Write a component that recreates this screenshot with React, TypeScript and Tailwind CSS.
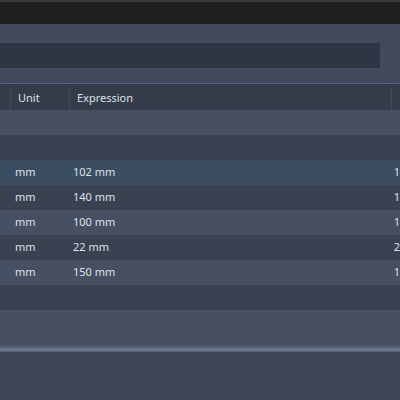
import React from "react";

const rows = [
  {unit: "", expr: "", val: "", tone: "light"},
  {unit: "", expr: "", val: "", tone: "dark"},
  {unit: "mm", expr: "102 mm", val: "1", tone: "selected"},
  {unit: "mm", expr: "140 mm", val: "1", tone: "dark"},
  {unit: "mm", expr: "100 mm", val: "1", tone: "light"},
  {unit: "mm", expr: "22 mm", val: "2", tone: "dark"},
  {unit: "mm", expr: "150 mm", val: "1", tone: "light"},
  {unit: "", expr: "", val: "", tone: "dark"},
];

const toneClass = (tone: string) => {
  if (tone === "selected") return "bg-[#3a4d61]";
  if (tone === "light") return "bg-[#474f62]";
  return "bg-[#3a4151]";
};

const App = () => {
  return (
    <div className="w-[400px] h-[400px] overflow-hidden bg-[#3d4454] text-[#dde2ea] text-[11px]"
         style={{fontFamily: '"Noto Sans", sans-serif'}}>
      <div className="h-[2px] bg-[#3a3a3a]"/>
      <div className="h-[22px] bg-[#1f1f1f]"/>

      <div className="h-[59px] bg-[#414a5c] pt-[19px]">
        <div className="w-[380px] h-[25px] bg-[#2e3543]"/>
      </div>

      <div className="border-t border-t-[#5a6477]">
        <div className="flex h-[26px] bg-[#343b49] items-center pt-[2px]">
          <div className="w-[11px] h-full border-r border-[#414a5a]"/>
          <div className="w-[59px] h-full border-r border-[#414a5a] pl-[7px] flex items-center">Unit</div>
          <div className="w-[322px] h-full border-r border-[#414a5a] pl-[7px] flex items-center">Expression</div>
          <div className="flex-1 h-full"/>
        </div>

        {rows.map((row, index) => (
          <div key={index} className={`flex h-[25px] items-center ${toneClass(row.tone)}`}>
            <div className="w-[15px]"/>
            <div className="w-[58px]">{row.unit}</div>
            <div className="w-[321px]">{row.expr}</div>
            <div className="flex-1">{row.val}</div>
          </div>
        ))}

        <div className="h-[36px] bg-[#474f62]"/>
        <div className="h-[2px] bg-[#56607a]"/>
        <div className="h-[3px] bg-[#6a7489]"/>
        <div className="h-[1px] bg-[#56607a]"/>
      </div>
    </div>
  );
};

export default App;
